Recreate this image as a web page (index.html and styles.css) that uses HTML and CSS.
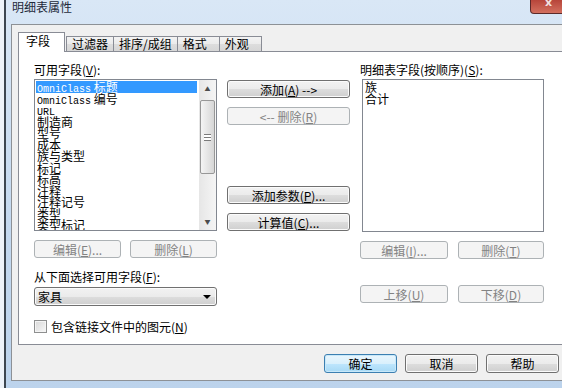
FILE: index.html
```html
<!DOCTYPE html>
<html lang="zh-CN">
<head>
  <meta charset="UTF-8" />
  <title>明细表属性</title>
  <link rel="stylesheet" href="styles.css">
</head>
<body>

  <div class="window">
    <div class="titlebar">
      <span class="title">明细表属性</span>
      <span class="close">x</span>
    </div>

    <div class="client">
      <div class="tabs">
        <div class="tab active">字段</div>
        <div class="tab">过滤器</div>
        <div class="tab">排序/成组</div>
        <div class="tab">格式</div>
        <div class="tab">外观</div>
      </div>

      <div class="panel">
        <div class="columns">
          <div class="col col-left">
            <div class="label">可用字段(<u>V</u>):</div>
            <div class="listbox">
              <ul class="items">
                <li class="selected"><span class="lat">OmniClass</span> 标题</li>
                <li><span class="lat">OmniClass</span> 编号</li>
                <li><span class="lat">URL</span></li>
                <li>制造商</li>
                <li>型号</li>
                <li>成本</li>
                <li>族与类型</li>
                <li>标记</li>
                <li>标高</li>
                <li>注释</li>
                <li>注释记号</li>
                <li>类型</li>
                <li>类型标记</li>
              </ul>
              <div class="scrollbar">
                <div class="arrow">&#9650;</div>
                <div class="track">
                  <div class="thumb"><span class="grip"></span></div>
                </div>
                <div class="arrow">&#9660;</div>
              </div>
            </div>
            <div class="btn-row">
              <button class="btn disabled">编辑(<u>E</u>)...</button>
              <button class="btn disabled">删除(<u>L</u>)</button>
            </div>
            <div class="label label-pick">从下面选择可用字段(<u>F</u>):</div>
            <div class="combo">
              <span>家具</span>
              <span class="combo-arrow"></span>
            </div>
          </div>

          <div class="col col-mid">
            <button class="btn">添加(<u>A</u>) --&gt;</button>
            <button class="btn disabled">&lt;-- 删除(<u>R</u>)</button>
            <button class="btn gap-top">添加参数(<u>P</u>)...</button>
            <button class="btn">计算值(<u>C</u>)...</button>
          </div>

          <div class="col col-right">
            <div class="label">明细表字段(按顺序)(<u>S</u>):</div>
            <div class="listbox listbox-right">
              <ul class="items">
                <li>族</li>
                <li>合计</li>
              </ul>
            </div>
            <div class="btn-row">
              <button class="btn disabled wide">编辑(<u>I</u>)...</button>
              <button class="btn disabled">删除(<u>T</u>)</button>
            </div>
            <div class="btn-row move-row">
              <button class="btn disabled wide">上移(<u>U</u>)</button>
              <button class="btn disabled">下移(<u>D</u>)</button>
            </div>
          </div>
        </div>

        <label class="check">
          <span class="box"></span>
          <span>包含链接文件中的图元(<u>N</u>)</span>
        </label>
      </div>

      <div class="footer">
        <button class="btn big default">确定</button>
        <button class="btn big">取消</button>
        <button class="btn big">帮助</button>
      </div>
    </div>
  </div>

</body>
</html>
```

FILE: styles.css
```css
* {
  margin: 0;
  padding: 0;
  box-sizing: border-box;
}

body {
  width: 562px;
  height: 388px;
  overflow: hidden;
  background-color: #eef3f9;
  font-family: "Noto Sans CJK SC", "Liberation Sans", sans-serif;
  font-size: 12px;
  color: #000;
}

u {
  text-decoration: underline;
}

.window {
  width: 590px;
  height: 388px;
  margin-left: 4px;
  border-left: 2px solid #3d4650;
  padding-left: 5px;
  background: linear-gradient(#d9e7f6, #c3d8ef 60%, #bcd3ec);
}

/* title bar */

.titlebar {
  height: 24px;
  display: flex;
  align-items: flex-start;
  justify-content: space-between;
  padding-left: 1px;
  padding-right: 27px;
}

.title {
  font-size: 12px;
  line-height: 14px;
  color: #1e2a3a;
}

.close {
  width: 37px;
  height: 14px;
  border: 1px solid #5b2a2a;
  border-top: none;
  border-radius: 0 0 4px 4px;
  background: linear-gradient(#b7453a, #d3705f);
  color: #f2e2e2;
  font-family: "DejaVu Sans", sans-serif;
  font-weight: bold;
  font-size: 11px;
  line-height: 6px;
  text-align: center;
  overflow: hidden;
}

/* client area */

.client {
  width: 563px;
  height: 357px;
  border: 1px solid #8d9196;
  border-right: none;
  background-color: #f0f0f0;
  padding: 7px 0 0 6px;
}

.tabs {
  display: flex;
  align-items: flex-end;
  height: 19px;
  padding-left: 2px;
}

.tab {
  min-width: 43px;
  height: 15px;
  padding: 0 5px;
  margin-right: -1px;
  border: 1px solid #898c95;
  border-bottom: none;
  background: linear-gradient(#f3f3f3, #ebebeb 50%, #dddddd 51%, #d6d6d6);
  line-height: 13px;
  white-space: nowrap;
}

.tab.active {
  position: relative;
  z-index: 1;
  min-width: 47px;
  height: 20px;
  margin: 0 1px -1px -2px;
  padding-left: 7px;
  background: #fff;
  line-height: 15px;
}

.panel {
  height: 294px;
  border: 1px solid #898c95;
  background-color: #fff;
  padding: 10px 0 0 15px;
}

.columns {
  display: flex;
}

.col {
  display: flex;
  flex-direction: column;
}

.col-left {
  width: 183px;
}

.col-mid {
  width: 123px;
  margin-left: 10px;
  padding-top: 18px;
  gap: 9px;
}

.col-right {
  width: 184px;
  margin-left: 10px;
}

.label {
  height: 15px;
  line-height: 15px;
  margin-bottom: 2px;
  white-space: nowrap;
}

.label-pick {
  margin-top: 11px;
  margin-bottom: 3px;
}

/* list boxes */

.listbox {
  display: flex;
  height: 152px;
  border: 1px solid #828790;
  background-color: #fff;
  overflow: hidden;
}

.listbox-right {
  height: 153px;
  margin-left: 2px;
}

.items {
  flex: 1;
  list-style: none;
  padding: 1px 2px 0 1px;
  overflow: hidden;
}

.items li {
  height: 11.5px;
  line-height: 11.5px;
  padding-left: 1px;
  white-space: nowrap;
}

.items li.selected {
  background-color: #3399ff;
  color: #fff;
}

.lat {
  font-family: "Liberation Mono", monospace;
  font-size: 10px;
}

.scrollbar {
  width: 17px;
  display: flex;
  flex-direction: column;
  background: linear-gradient(90deg, #e6e6e6, #f5f5f5);
}

.arrow {
  height: 17px;
  font-size: 6px;
  line-height: 17px;
  text-align: center;
  color: #4d4d4d;
}

.track {
  flex: 1;
  padding-top: 3px;
}

.thumb {
  height: 74px;
  margin: 0 1px;
  border: 1px solid #979797;
  border-radius: 2px;
  background: linear-gradient(90deg, #f4f4f4, #e5e5e5 50%, #d6d6d6);
  display: flex;
  align-items: center;
  justify-content: center;
}

.grip {
  width: 7px;
  height: 7px;
  border-top: 1px solid #7b7b7b;
  border-bottom: 1px solid #7b7b7b;
  background: linear-gradient(#fff 0, #fff 2px, #7b7b7b 2px, #7b7b7b 3px, #fff 3px);
}

/* buttons */

.btn {
  height: 18px;
  border: 1px solid #707070;
  border-radius: 3px;
  background: linear-gradient(#f2f2f2, #ebebeb 50%, #dddddd 51%, #cfcfcf);
  box-shadow: inset 0 0 0 1px #fbfbfb;
  font-family: inherit;
  font-size: 12px;
  line-height: 15px;
  color: #000;
  white-space: nowrap;
}

.btn.disabled {
  border-color: #adb2b5;
  background: #f4f4f4;
  box-shadow: none;
  color: #838383;
}

.btn.big {
  width: 73px;
  height: 19px;
}

.btn.default {
  border-color: #3c7fb1;
  background: linear-gradient(#eaf6fd, #d9f0fc 50%, #bee6fd 51%, #a7d9f5);
  box-shadow: inset 0 0 0 1px #c8e8f9;
}

.gap-top {
  margin-top: 52px;
}

.btn-row {
  display: flex;
  justify-content: space-between;
  margin-top: 9px;
}

.btn-row .btn {
  width: 87px;
}

.col-right .btn-row .btn {
  width: 86px;
}

.col-right .btn-row .btn.wide {
  width: 88px;
}

.move-row {
  margin-top: 26px;
}

/* combo */

.combo {
  height: 19px;
  display: flex;
  align-items: center;
  justify-content: space-between;
  padding: 0 5px 0 3px;
  border: 1px solid #707070;
  border-radius: 3px;
  background: linear-gradient(#f2f2f2, #ebebeb 50%, #dddddd 51%, #cfcfcf);
  box-shadow: inset 0 0 0 1px #fbfbfb;
}

.combo-arrow {
  width: 0;
  height: 0;
  border-left: 4px solid transparent;
  border-right: 4px solid transparent;
  border-top: 4px solid #000;
}

/* checkbox */

.check {
  display: flex;
  align-items: center;
  gap: 4px;
  margin-top: 14px;
  height: 13px;
  line-height: 13px;
  white-space: nowrap;
}

.box {
  width: 13px;
  height: 13px;
  border: 1px solid #8e8f8f;
  background: linear-gradient(135deg, #d8d8d8, #f7f7f7);
  box-shadow: inset 0 0 0 1px #f4f4f4;
}

/* footer */

.footer {
  display: flex;
  justify-content: flex-end;
  gap: 8px;
  padding: 9px 15px 0 0;
}
```
